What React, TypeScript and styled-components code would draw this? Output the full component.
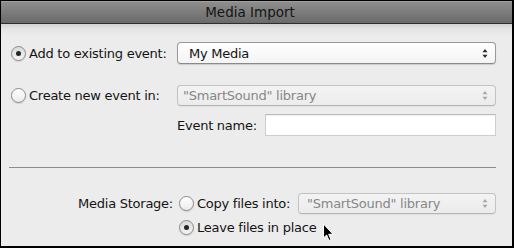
import React from "react";
import styled, { createGlobalStyle, css } from "styled-components";

const Global = createGlobalStyle`
  html, body { margin: 0; padding: 0; background: #000; }
  body {
    width: 514px; height: 248px; overflow: hidden;
    font-family: "DejaVu Sans", "Liberation Sans", sans-serif;
    -webkit-font-smoothing: antialiased;
  }
`;

const Window = styled.div`
  position: relative;
  width: 514px;
  height: 248px;
  box-sizing: border-box;
  border-style: solid;
  border-color: #000;
  border-width: 1px 2px 2px 1px;
  display: flex;
  flex-direction: column;
  background: #ececec;
`;

const TitleBar = styled.div`
  height: 23px;
  box-sizing: border-box;
  flex: none;
  border-bottom: 1px solid #2e2e2e;
  background: linear-gradient(to bottom, #b0b0b0 0px, #8e8e8e 1px, #7c7c7c 50%, #6a6a6a 100%);
  display: flex;
  align-items: center;
  justify-content: center;
  font-size: 13.5px;
  color: #141414;
  padding-right: 13px;
`;

const Content = styled.div`
  flex: 1;
  display: flex;
  flex-direction: column;
  padding: 18px 16px 0 8px;
  background: linear-gradient(to bottom, #d2d2d2 0px, #e4e4e4 5px, #ececec 12px, #ececec 100%);
  font-size: 13px;
  letter-spacing: -0.25px;
  color: #141414;
`;

const ChoiceRow = styled.div<{ $top: number; $h: number }>`
  display: grid;
  grid-template-columns: 168px 1fr;
  align-items: center;
  height: ${(p) => p.$h}px;
  margin-top: ${(p) => p.$top}px;
`;

const RadioLabel = styled.label<{ $indent?: number }>`
  display: flex;
  align-items: center;
  gap: 3px;
  padding-left: ${(p) => p.$indent ?? 0}px;
  white-space: nowrap;
`;

const Radio = styled.span<{ $on?: boolean }>`
  position: relative;
  flex: none;
  width: 15px;
  height: 15px;
  box-sizing: border-box;
  border-radius: 50%;
  border: 1px solid #8a8a8a;
  background: ${(p) =>
    p.$on
      ? "linear-gradient(to bottom, #d9d9d9, #f4f4f4)"
      : "linear-gradient(to bottom, #ffffff, #ebebeb)"};
  box-shadow: 0 1px 1px rgba(0, 0, 0, 0.12);
  ${(p) =>
    p.$on &&
    css`
      &::after {
        content: "";
        position: absolute;
        left: 4px;
        top: 4px;
        width: 5px;
        height: 5px;
        border-radius: 50%;
        background: #262626;
      }
    `}
`;

const Popup = styled.div<{ $disabled?: boolean; $pad: number; $h: number }>`
  height: ${(p) => p.$h}px;
  box-sizing: border-box;
  border-radius: 4px;
  border: 1px solid ${(p) => (p.$disabled ? "#c3c3c3" : "#9a9a9a")};
  border-bottom-color: ${(p) => (p.$disabled ? "#b5b5b5" : "#8a8a8a")};
  background: ${(p) =>
    p.$disabled
      ? "linear-gradient(to bottom, #f3f3f3, #ececec)"
      : "linear-gradient(to bottom, #ffffff, #f4f4f4)"};
  box-shadow: 0 1px 1px rgba(0, 0, 0, ${(p) => (p.$disabled ? 0.05 : 0.14)});
  display: flex;
  align-items: center;
  justify-content: space-between;
  padding: 0 7px 0 ${(p) => p.$pad}px;
  color: ${(p) => (p.$disabled ? "#878787" : "#121212")};
  white-space: nowrap;
`;

const Arrows = ({ disabled }: { disabled?: boolean }) => (
  <svg width="6" height="11" viewBox="0 0 6 11">
    <polygon points="3,1 5.5,4.3 0.5,4.3" fill={disabled ? "#a8a8a8" : "#2a2a2a"} />
    <polygon points="0.5,6.7 5.5,6.7 3,10" fill={disabled ? "#a8a8a8" : "#2a2a2a"} />
  </svg>
);

const NameRow = styled.div`
  display: flex;
  align-items: center;
  gap: 8px;
  height: 22px;
  margin-top: 8px;
  margin-left: 168px;
`;

const TextField = styled.div`
  flex: 1;
  height: 22px;
  box-sizing: border-box;
  background: #fff;
  border: 1px solid #cdcdcd;
  border-top-color: #b9b9b9;
  box-shadow: inset 0 1px 1px rgba(0, 0, 0, 0.06);
`;

const Separator = styled.hr`
  margin: 31px 0 0 0;
  border: none;
  border-top: 1px solid #8c8c8c;
  height: 0;
`;

const StorageGrid = styled.div`
  display: grid;
  grid-template-columns: 164px 113px 1fr;
  grid-template-rows: 21px 16px;
  column-gap: 6px;
  row-gap: 5px;
  align-items: center;
  margin-top: 25px;
`;

const StorageLabel = styled.div`
  text-align: right;
  white-space: nowrap;
`;

const WideCell = styled.div`
  grid-column: 2 / 4;
`;

const Pointer = styled.svg`
  position: absolute;
  left: 321px;
  top: 222px;
`;

export default function App() {
  return (
    <>
      <Global />
      <Window>
        <TitleBar>Media Import</TitleBar>
        <Content>
          <ChoiceRow $top={0} $h={22}>
            <RadioLabel $indent={2}>
              <Radio $on />
              Add to existing event:
            </RadioLabel>
            <Popup $pad={11} $h={22}>
              <span>My Media</span>
              <Arrows />
            </Popup>
          </ChoiceRow>
          <ChoiceRow $top={21} $h={21}>
            <RadioLabel $indent={2}>
              <Radio />
              Create new event in:
            </RadioLabel>
            <Popup $disabled $pad={5} $h={21}>
              <span>"SmartSound" library</span>
              <Arrows disabled />
            </Popup>
          </ChoiceRow>
          <NameRow>
            <span>Event name:</span>
            <TextField />
          </NameRow>
          <Separator />
          <StorageGrid>
            <StorageLabel>Media Storage:</StorageLabel>
            <RadioLabel>
              <Radio />
              Copy files into:
            </RadioLabel>
            <Popup $disabled $pad={8} $h={21}>
              <span>"SmartSound" library</span>
              <Arrows disabled />
            </Popup>
            <span />
            <WideCell>
              <RadioLabel>
                <Radio $on />
                Leave files in place
              </RadioLabel>
            </WideCell>
          </StorageGrid>
        </Content>
        <Pointer width="13" height="19" viewBox="0 0 13 19">
          <path
            d="M1.5 1 L1.5 15 L4.6 12 L7 17.5 L9 16.6 L6.7 11.3 L11 11.3 Z"
            fill="#000"
            stroke="#fff"
            strokeWidth="1"
            strokeLinejoin="round"
          />
        </Pointer>
      </Window>
    </>
  );
}
